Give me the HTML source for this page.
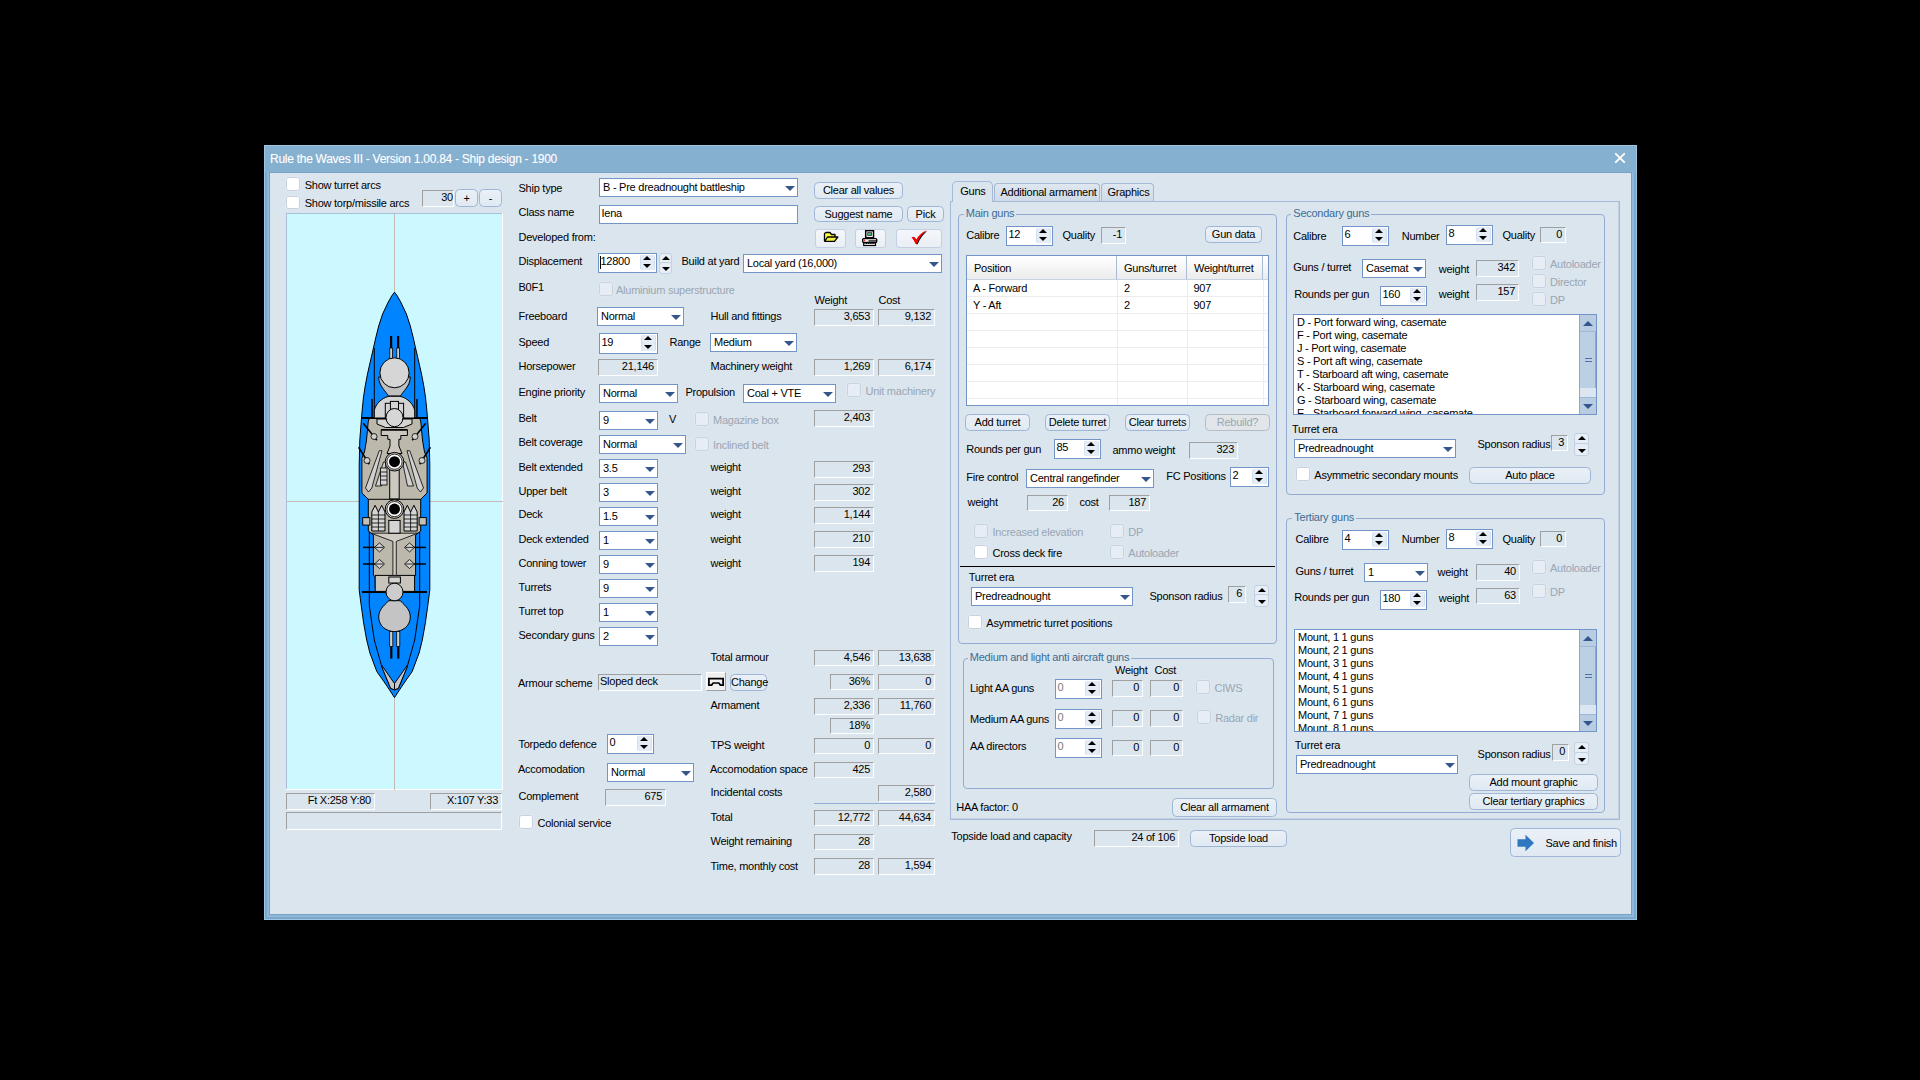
<!DOCTYPE html>
<html><head><meta charset="utf-8"><title>Rule the Waves III - Ship design</title>
<style>
*{box-sizing:border-box;margin:0;padding:0}
html,body{width:1920px;height:1080px;background:#000;overflow:hidden}
body{position:relative;font-family:"Liberation Sans",sans-serif;font-size:11px;letter-spacing:-0.25px;color:#000}
#win{position:absolute;left:264px;top:145px;width:1373px;height:775px;background:linear-gradient(#86b0d0 0,#86b0d0 27px,#7ca8cc 28px);box-shadow:inset 1px 1px 0 #9cc6e6,inset -1px -1px 0 #9cc6e6}
.fr{position:absolute;background:#90b8d8}
#title{position:absolute;left:6px;top:6.800px;font-size:12px;letter-spacing:-0.27px;color:#fff;line-height:15px;white-space:nowrap;text-shadow:0 0 1px rgba(255,255,255,.3)}
#cx{position:absolute;left:1350px;top:7px}
#client{position:absolute;left:5px;top:27px;width:1363px;height:743px;background:#dbe5ee;border:1px solid #76a2c8}
.t{position:absolute;white-space:nowrap;line-height:13px;height:13px}
.t.r{text-align:right}
.t.d,.d{color:#9aa6b2}
.t.gc{color:#3c6c94;background:#dbe5ee;padding:0 2px}
.cb{position:absolute;background:#fff;border:1px solid #7394c6;white-space:nowrap;overflow:hidden}
.cb span{position:absolute;left:3px;top:50%;margin-top:-6.5px;line-height:13px}
.cb i{position:absolute;right:2.500px;top:50%;margin-top:-2px;width:0;height:0;border-left:5px solid transparent;border-right:5px solid transparent;border-top:5px solid #34568c}
.ed{position:absolute;background:#fff;border:1px solid #7394c6}
.ed span{position:absolute;left:1.500px;top:0.500px;line-height:13px}
.sp{position:absolute;background:#fff;border:1px solid #7394c6;white-space:nowrap}
.sp span{position:absolute;left:1.500px;top:50%;margin-top:-8px;line-height:13px}
.sp.g span{color:#7a7a7a}
.sp b{position:absolute;right:1.500px;top:1px;bottom:2px;width:14.500px;background:#d4e0f0;border-radius:2px}
.sp b u,.ud u{position:absolute;left:50%;margin-left:-4px;top:1px;width:0;height:0;border-left:4px solid transparent;border-right:4px solid transparent;border-bottom:4.500px solid #000}
.sp b s,.ud s{position:absolute;left:50%;margin-left:-4px;bottom:2px;width:0;height:0;border-left:4px solid transparent;border-right:4px solid transparent;border-top:4.500px solid #000}
.sp b:before{content:"";position:absolute;left:1px;right:1px;top:0;height:8px;border-radius:2px;background:#e4ecf6}
.sp b:after{content:"";position:absolute;left:1px;right:1px;bottom:0;height:8px;border-radius:2px;background:#e4ecf6}
.sp b u,.sp b s{z-index:2}
.ud{position:absolute}
.ud:before,.ud:after{content:"";position:absolute;left:0;right:0;height:48%;border:1px solid #c2d0e2;border-radius:3px;background:#e8eef6}
.ud:before{top:0}.ud:after{bottom:0}
.ud u{top:3px;z-index:2}.ud s{bottom:3px;z-index:2}
.bx{position:absolute;border:1px solid;border-color:#a0a0a0 #fff #fff #a0a0a0;line-height:13px;padding:0 3px 0 1px;white-space:nowrap;overflow:hidden}
.bx.r{text-align:right}.bx.p0{padding-right:0}.bx.l{text-align:left}
.bt{position:absolute;border:1px solid #a0b6d6;border-radius:4.500px;background:linear-gradient(#eaf0f7,#e0e9f2);text-align:center;white-space:nowrap}
.bt.dis{color:#9aa6b2;border-color:#b4bcc4;background:#e2e6ea}
.cbn{position:absolute;background:#f0f0f0;border:1px solid;border-color:#fff #a0a0a0 #a0a0a0 #fff}
.ib{position:absolute;border:1px solid #c4d0e2;border-radius:3px;background:linear-gradient(#f4f6fa,#eaeff5)}
.ib svg{position:absolute}
.ck{position:absolute;width:13.600px;height:13.700px;margin-top:-0.700px;background:#fff;border:1px solid #c6d1de;border-radius:2.500px;box-shadow:0 0 0 0.500px #e4ebf2}
.ck.dis{background:#e6edf4;border-color:#c8d2dd}
.gb{position:absolute;border:1px solid #93aad2;border-radius:4px}
#page{position:absolute;left:950px;top:201px;width:670px;height:619px;border:1px solid #a6b9d6;box-shadow:inset -1px -1px 0 #c4d2e4}
.tab{position:absolute;border:1px solid #a6b9d6;border-bottom:none;border-radius:4px 4px 0 0;background:linear-gradient(#dfe7f0,#cfdbe8)}
.tab span{position:absolute;top:2px;line-height:13px;white-space:nowrap}
.tab.act{background:#dbe5ee;border-radius:5px 5px 0 0}
.tab.act:after{content:"";position:absolute;left:0;right:0;bottom:0;height:1px;background:#dbe5ee}
#tbl{position:absolute;background:#fff;border:1px solid #7394c6;overflow:hidden}
.th{position:absolute;top:0;height:23.500px;background:linear-gradient(#fff,#ececec);border-right:1px solid #a8bcd8;border-bottom:1px solid #c8d4e4}
.th span{position:absolute;left:7px;top:5.500px;line-height:13px;white-space:nowrap}
.hl{position:absolute;left:0;right:0;height:1px;background:#ececec}
.vl{position:absolute;top:24px;bottom:0;width:1px;background:#ececec}
.td{position:absolute;line-height:13px;white-space:nowrap}
.lb{position:absolute;background:#fff;border:1px solid #7394c6;overflow:hidden}
.li{position:absolute;left:3px;line-height:13px;white-space:nowrap}
.sb{position:absolute;right:0;top:0;bottom:0;width:17px;background:#dce6f2;border-left:1px solid #90a8d0}
.sbu,.sbd{position:absolute;left:0;right:0;height:17px;background:#b8cce2}
.sbu{top:0;border-bottom:1px solid #a0b6d4}.sbd{bottom:0;border-top:1px solid #a0b6d4}
.sbu i{position:absolute;left:3px;top:6px;width:0;height:0;border-left:5px solid transparent;border-right:5px solid transparent;border-bottom:5px solid #34568c}
.sbd i{position:absolute;left:3px;top:6px;width:0;height:0;border-left:5px solid transparent;border-right:5px solid transparent;border-top:5px solid #34568c}
.sbt{position:absolute;left:0;right:0;top:17px;bottom:26px;background:#bcd0e4;border-right:1px solid #90a8d0}
.sbt em{position:absolute;left:4.500px;top:50%;margin-top:-2px;width:7px;height:4px;border-top:1px solid #5070a8;border-bottom:1px solid #5070a8}
</style></head>
<body>
<div id="win"><div id="title">Rule the Waves III - Version 1.00.84 - Ship design - 1900</div><svg id="cx" width="12" height="12" viewBox="0 0 12 12"><path d="M1.8 1.800 L10.2 10.200 M10.2 1.800 L1.8 10.200" stroke="#fff" stroke-width="1.900" stroke-linecap="round"/></svg><div class="fr" style="left:3px;top:27px;width:2px;height:745px"></div><div class="fr" style="left:1368px;top:27px;width:2px;height:745px"></div><div class="fr" style="left:3px;top:770px;width:1367px;height:2px"></div><div id="client"></div></div>
<svg id="ship" width="1920" height="1080" viewBox="0 0 1920 1080" style="position:absolute;left:0;top:0;pointer-events:none"><rect x="286" y="213" width="217" height="577" fill="#ccf8ff"/><rect x="286" y="213" width="1" height="577" fill="#a8c0d8"/><rect x="286" y="213" width="217" height="1" fill="#a8c0d8"/><rect x="502" y="213" width="1" height="577" fill="#fff"/><rect x="286" y="789" width="217" height="1" fill="#fff"/><rect x="394" y="214" width="1" height="576" fill="#c4bcb4"/><rect x="287" y="501" width="216" height="1" fill="#c4bcb4"/><polygon points="394.5,292.2 391.7,296.0 388.3,302.0 382.6,314.0 378.7,326.0 375.7,338.0 373.0,350.0 370.2,362.0 367.5,374.0 365.2,386.0 363.4,398.0 362.2,410.0 361.5,418.0 359.8,440.0 359.2,465.0 359.2,590.0 361.0,604.0 363.6,622.8 366.7,640.0 369.9,653.0 376.8,671.5 386.3,685.0 394.5,697.6 402.7,685.0 412.2,671.5 419.1,653.0 422.3,640.0 425.4,622.8 428.0,604.0 429.8,590.0 429.8,465.0 429.2,440.0 427.5,418.0 426.8,410.0 425.6,398.0 423.8,386.0 421.5,374.0 418.8,362.0 416.0,350.0 413.3,338.0 410.3,326.0 406.4,314.0 400.7,302.0 397.3,296.0 394.5,292.2" fill="#0084ff" stroke="#000" stroke-width="1"/><path d="M374.3 348 V416 M414.7 348 V416" stroke="#000" fill="none"/><polyline points="369.3,530.0 369.3,605.8 374.3,640.0 381.9,667.0 390.7,688.5 394.5,689.7 394.5,689.7 398.3,688.5 407.1,667.0 414.7,640.0 419.7,605.8 419.7,530.0" fill="none" stroke="#000"/><polygon points="381.5,665.0 394.5,683.5 407.5,665.0 407.1,667.0 398.3,688.5 394.5,689.7 390.7,688.5 381.9,667.0" fill="#c8c8c8" stroke="#000"/><path d="M394.5 683.5 V689.7" stroke="#000"/><rect x="361.4" y="417" width="66.400" height="2" fill="#000"/><rect x="362" y="591" width="65" height="2" fill="#000"/><rect x="390" y="336" width="2.200" height="12" fill="#000"/><rect x="389.8" y="348" width="2.800" height="11" fill="#d0d0d0" stroke="#000" stroke-width="0.800"/><rect x="397" y="336" width="2.200" height="12" fill="#000"/><rect x="396.8" y="348" width="2.800" height="11" fill="#d0d0d0" stroke="#000" stroke-width="0.800"/><path d="M378.7 377 C378.7 386 386.5 392 388.5 396 H400.5 C402.5 392 410.3 386 410.3 377 Z" fill="#c0c0c0" stroke="#000"/><ellipse cx="394.5" cy="372.800" rx="14.600" ry="15" fill="#d6d6d6" stroke="#000"/><path d="M374.3 418 V410 C376.5 402 384.5 396.300 390.5 396.300 H398.5 C404.5 396.300 412.5 402 414.7 410 V418 Z" fill="#d4d4d4" stroke="#000"/><rect x="385.3" y="403.300" width="18.300" height="14" fill="#d4d4d4" stroke="#000"/><rect x="390.4" y="401.400" width="8.100" height="8" fill="#d4d4d4" stroke="#000"/><rect x="371.3" y="399" width="1.500" height="19" fill="#000"/><rect x="416.2" y="399" width="1.500" height="19" fill="#000"/><polygon points="369.3,418.5 368.3,421.0 366.5,440.0 364.5,452.0 361.9,458.0 361.9,493.0 368.3,499.3 368.3,531.0 373.4,535.0 373.4,575.4 375.2,577.0 375.2,588.0 378.0,591.5 411.0,591.5 413.8,588.0 413.8,577.0 415.6,575.4 415.6,535.0 420.7,531.0 420.7,499.3 427.1,493.0 427.1,458.0 424.5,452.0 422.5,440.0 420.7,421.0 419.7,418.5" fill="#bcb8ac" stroke="#000"/><rect x="375.2" y="575.400" width="39.400" height="16" fill="#c8c4bc" stroke="#000"/><path d="M377.0 419 V424 L385.5 427.500 H403.5 L412.0 424 V419 Z" fill="#d4d4d4" stroke="#000"/><ellipse cx="394.5" cy="417.600" rx="8.500" ry="9.100" fill="#d6d6d6" stroke="#000"/><path d="M381.2 429.900 H407.400 V435.500 H400.800 V439.300 H398.900 L398.900 446 L402 453.500 H387 L390 446 V439.300 H387.800 V435.500 H381.200 Z" fill="#ccc8c0" stroke="#000"/><rect x="381.2" y="429" width="26.200" height="1.600" fill="#000"/><rect x="389.7" y="466" width="9.500" height="33" fill="#ccc8c0" stroke="#000"/><polygon points="379.3,450.700 382.0,450.700 371.8,488 368.5,492 365.5,488" fill="#d0d0d0" stroke="#000" stroke-width="0.800"/><polygon points="386.5,462 383.5,462 375.5,486 381.5,486" fill="#d0d0d0" stroke="#000" stroke-width="0.800"/><path d="M363.3 423.300 L376.8 440.300 M358.6 447.200 L369.3 464.200" stroke="#000" stroke-width="1.600"/><circle cx="374.0" cy="436.500" r="3" fill="#d0d0d0" stroke="#000" stroke-width="0.800"/><circle cx="367.0" cy="460.500" r="3" fill="#d0d0d0" stroke="#000" stroke-width="0.800"/><rect x="362.7" y="517.600" width="7.200" height="7.500" fill="#c4c0b8" stroke="#000"/><path d="M371.8 531 V512 L375.1 505.300 L378.4 512 L381.7 505.300 L385.0 512 V531 Z" fill="#d4d4d4" stroke="#000"/><path d="M378.4 512 V531 M371.8 515 H385.0 M371.8 519 H385.0 M371.8 523 H385.0 M371.8 527 H385.0" stroke="#000" stroke-width="0.800" fill="none"/><path d="M363.0 547.4 L379.5 547.4" stroke="#000" stroke-width="1.500"/><polygon points="379.5,542.9 374.5,547.4 379.5,551.9 384.5,547.4" fill="#d0d0d0" stroke="#000" stroke-width="0.800"/><path d="M375.5 547.4 H383.5" stroke="#000" stroke-width="0.800"/><path d="M363.0 564 L379.5 564" stroke="#000" stroke-width="1.500"/><polygon points="379.5,559.5 374.5,564 379.5,568.5 384.5,564" fill="#d0d0d0" stroke="#000" stroke-width="0.800"/><path d="M375.5 564 H383.5" stroke="#000" stroke-width="0.800"/><polygon points="409.7,450.700 407.0,450.700 417.2,488 420.5,492 423.5,488" fill="#d0d0d0" stroke="#000" stroke-width="0.800"/><polygon points="402.5,462 405.5,462 413.5,486 407.5,486" fill="#d0d0d0" stroke="#000" stroke-width="0.800"/><path d="M425.7 423.300 L412.2 440.300 M430.4 447.200 L419.7 464.200" stroke="#000" stroke-width="1.600"/><circle cx="415.0" cy="436.500" r="3" fill="#d0d0d0" stroke="#000" stroke-width="0.800"/><circle cx="422.0" cy="460.500" r="3" fill="#d0d0d0" stroke="#000" stroke-width="0.800"/><rect x="419.1" y="517.600" width="7.200" height="7.500" fill="#c4c0b8" stroke="#000"/><path d="M404.0 531 V512 L407.3 505.300 L410.6 512 L413.9 505.300 L417.2 512 V531 Z" fill="#d4d4d4" stroke="#000"/><path d="M410.6 512 V531 M404.0 515 H417.2 M404.0 519 H417.2 M404.0 523 H417.2 M404.0 527 H417.2" stroke="#000" stroke-width="0.800" fill="none"/><path d="M426.0 547.4 L409.5 547.4" stroke="#000" stroke-width="1.500"/><polygon points="409.5,542.9 414.5,547.4 409.5,551.9 404.5,547.4" fill="#d0d0d0" stroke="#000" stroke-width="0.800"/><path d="M413.5 547.4 H405.5" stroke="#000" stroke-width="0.800"/><path d="M426.0 564 L409.5 564" stroke="#000" stroke-width="1.500"/><polygon points="409.5,559.5 414.5,564 409.5,568.5 404.5,564" fill="#d0d0d0" stroke="#000" stroke-width="0.800"/><path d="M413.5 564 H405.5" stroke="#000" stroke-width="0.800"/><rect x="380.5" y="468" width="6.500" height="17" fill="#d4d4d4" stroke="#000" stroke-width="0.800"/><path d="M380.5 472 H387 M380.500 476 H387 M380.500 480 H387" stroke="#000" stroke-width="0.800"/><path d="M368 499.300 H421" stroke="#000"/><path d="M371 533.200 L392.900 541.400 V575.400 H396.300 V541.400 L418 533.200 Z" fill="#d0ccc4" stroke="#000" stroke-width="0.800"/><rect x="388.8" y="520.400" width="11.300" height="12.800" fill="#d4d4d4" stroke="#000"/><circle cx="394.5" cy="461.7" r="9.300" fill="#ccc8c0" stroke="#000"/><circle cx="394.5" cy="461.7" r="7.600" fill="#fff" stroke="#000" stroke-width="0.800"/><circle cx="394.5" cy="461.7" r="5.500" fill="#000"/><circle cx="394.5" cy="509.1" r="9.300" fill="#ccc8c0" stroke="#000"/><circle cx="394.5" cy="509.1" r="7.600" fill="#fff" stroke="#000" stroke-width="0.800"/><circle cx="394.5" cy="509.1" r="5.500" fill="#000"/><rect x="388.8" y="577" width="11.600" height="6" fill="#d4d4d4" stroke="#000"/><path d="M378.7 617 C378.7 608 386.5 604 388.5 600.700 H400.5 C402.5 604 410.3 608 410.3 617 C410.3 626 402.5 631.600 394.5 631.600 C386.5 631.600 378.7 626 378.7 617 Z" fill="#c4c4c4" stroke="#000"/><ellipse cx="394.5" cy="592" rx="8.500" ry="8.800" fill="#cccccc" stroke="#000"/><rect x="389.7" y="631.600" width="3.100" height="15" fill="#d0d0d0" stroke="#000" stroke-width="0.800"/><rect x="390.2" y="646.600" width="2.200" height="12" fill="#000"/><rect x="396.7" y="631.600" width="3.100" height="15" fill="#d0d0d0" stroke="#000" stroke-width="0.800"/><rect x="397.2" y="646.600" width="2.200" height="12" fill="#000"/></svg>
<div class="ck" style="left:286.3px;top:177.9px"></div>
<div class="ck" style="left:286.3px;top:196.2px"></div>
<div class="t " style="left:304.7px;top:178.8px">Show turret arcs</div>
<div class="t " style="left:304.7px;top:197.1px">Show torp/missile arcs</div>
<div class="bx r p0" style="left:422px;top:190px;width:32px;height:17px">30</div>
<div class="bt" style="left:455px;top:189px;width:23px;height:18px;line-height:16px">+</div>
<div class="bt" style="left:479px;top:189px;width:23px;height:18px;line-height:16px">-</div>
<div class="bx r" style="left:286px;top:793px;width:89px;height:17px">Ft X:258 Y:80</div>
<div class="bx r" style="left:430px;top:793px;width:72px;height:17px">X:107 Y:33</div>
<div class="bx r" style="left:286px;top:812px;width:216px;height:18px"></div>
<div class="t " style="left:518.5px;top:181.9px">Ship type</div>
<div class="cb" style="left:599px;top:178px;width:199px;height:19px"><span>B - Pre dreadnought battleship</span><i></i></div>
<div class="bt" style="left:814px;top:182px;width:89px;height:17px;line-height:15px">Clear all values</div>
<div class="t " style="left:518.5px;top:205.9px">Class name</div>
<div class="ed" style="left:599px;top:205px;width:199px;height:19px"><span>Iena</span></div>
<div class="bt" style="left:814px;top:206px;width:89px;height:16px;line-height:14px">Suggest name</div>
<div class="bt" style="left:907px;top:206px;width:37px;height:16px;line-height:14px">Pick</div>
<div class="t " style="left:518.5px;top:230.9px">Developed from:</div>
<div class="ib" style="left:815px;top:229px;width:31px;height:19px"></div>
<div class="ib" style="left:855px;top:229px;width:31px;height:19px"></div>
<div class="ib" style="left:896px;top:229px;width:46px;height:19px"></div>
<svg width="140" height="24" viewBox="810 226 140 24" style="position:absolute;left:810px;top:226px"><path d="M824.5 241 V233.500 L826 232.500 H830 L831.500 234.500 H835 V237" fill="#ffff40" stroke="#000" stroke-width="1.300" stroke-linejoin="round"/><path d="M824.700 241.300 L827.500 237 H837.800 L834.500 241.300 Z" fill="#f4f440" stroke="#000" stroke-width="1.300" stroke-linejoin="round"/><rect x="865.7" y="230.700" width="7.800" height="7" fill="#fff" stroke="#000" stroke-width="1.500"/><rect x="867.3" y="232.200" width="4.600" height="3.600" fill="#222"/><rect x="868" y="232.800" width="3.200" height="2.200" fill="#20d060"/><rect x="868.5" y="232.800" width="2" height="1" fill="#e040e0"/><rect x="862.7" y="238.600" width="14" height="3.800" rx="1" fill="#fff" stroke="#000" stroke-width="1.400"/><rect x="863.7" y="243" width="11.800" height="2.500" fill="#fff" stroke="#000" stroke-width="1.200"/><rect x="868.5" y="240.300" width="8" height="1.200" fill="#000"/><circle cx="864.600" cy="240.300" r="0.800" fill="#f00"/><path d="M866 243.600 h1 m1.200 0 h1 m1.200 0 h1 m1.200 0 h1" stroke="#000" stroke-width="1"/><path d="M912.300 237.800 L914.500 237.200 L916.800 240.300 C919.500 236 922.500 233 927.300 230.800 C923 234.500 920 238.800 917.700 244.200 L916.200 244.200 C915.300 241.800 914 239.600 912.300 237.800 Z" fill="#000"/><path d="M911.500 237.300 L913.700 236.700 L916 239.800 C918.700 235.500 921.700 232.500 926.500 230.300 C922.200 234 919.200 238.300 916.900 243.700 L915.400 243.700 C914.500 241.300 913.200 239.100 911.500 237.300 Z" fill="#ff0000"/></svg>
<div class="t " style="left:518.5px;top:255.2px">Displacement</div>
<div class="sp" style="left:598px;top:253px;width:59px;height:20px"><span>12800</span><b><u></u><s></s></b></div>
<div style="position:absolute;left:600px;top:256px;width:1px;height:13px;background:#000"></div>
<div class="ud" style="left:659px;top:253px;width:13px;height:21px"><u></u><s></s></div>
<div class="t " style="left:681.5px;top:255.4px">Build at yard</div>
<div class="cb" style="left:743px;top:254px;width:199px;height:19px"><span>Local yard (16,000)</span><i></i></div>
<div class="t " style="left:518.5px;top:281.4px">B0F1</div>
<div class="ck dis" style="left:599px;top:283px"></div>
<div class="t d" style="left:616.0px;top:283.9px">Aluminium superstructure</div>
<div class="t " style="left:814.5px;top:293.9px">Weight</div>
<div class="t " style="left:878.5px;top:293.9px">Cost</div>
<div class="t " style="left:518.5px;top:309.7px">Freeboard</div>
<div class="cb" style="left:597px;top:307px;width:87px;height:19px"><span>Normal</span><i></i></div>
<div class="t " style="left:710.5px;top:309.7px">Hull and fittings</div>
<div class="bx r" style="left:814px;top:309px;width:60px;height:17px">3,653</div>
<div class="bx r" style="left:878px;top:309px;width:57px;height:17px">9,132</div>
<div class="t " style="left:518.5px;top:335.9px">Speed</div>
<div class="sp" style="left:599px;top:333px;width:59px;height:21px"><span>19</span><b><u></u><s></s></b></div>
<div class="t " style="left:669.5px;top:336.4px">Range</div>
<div class="cb" style="left:710px;top:333px;width:87px;height:19px"><span>Medium</span><i></i></div>
<div class="t " style="left:518.5px;top:360.2px">Horsepower</div>
<div class="bx r" style="left:598px;top:359px;width:60px;height:17px">21,146</div>
<div class="t " style="left:710.5px;top:360.2px">Machinery weight</div>
<div class="bx r" style="left:814px;top:359px;width:60px;height:17px">1,269</div>
<div class="bx r" style="left:878px;top:359px;width:57px;height:17px">6,174</div>
<div class="t " style="left:518.5px;top:385.9px">Engine priority</div>
<div class="cb" style="left:599px;top:384px;width:79px;height:19px"><span>Normal</span><i></i></div>
<div class="t " style="left:685.5px;top:386.4px">Propulsion</div>
<div class="cb" style="left:743px;top:384px;width:93px;height:19px"><span>Coal + VTE</span><i></i></div>
<div class="ck dis" style="left:847px;top:384px"></div>
<div class="t d" style="left:865.5px;top:384.9px">Unit machinery</div>
<div class="t " style="left:518.5px;top:411.9px">Belt</div>
<div class="cb" style="left:599px;top:411px;width:59px;height:19px"><span>9</span><i></i></div>
<div class="t " style="left:669.0px;top:412.9px">V</div>
<div class="ck dis" style="left:695px;top:413px"></div>
<div class="t d" style="left:713.0px;top:413.9px">Magazine box</div>
<div class="bx r" style="left:814px;top:410px;width:60px;height:17px">2,403</div>
<div class="t " style="left:518.5px;top:435.9px">Belt coverage</div>
<div class="cb" style="left:599px;top:435px;width:87px;height:19px"><span>Normal</span><i></i></div>
<div class="ck dis" style="left:695px;top:438px"></div>
<div class="t d" style="left:713.0px;top:438.9px">Inclined belt</div>
<div class="t " style="left:518.5px;top:460.9px">Belt extended</div>
<div class="cb" style="left:599px;top:459px;width:59px;height:19px"><span>3.5</span><i></i></div>
<div class="t " style="left:710.5px;top:460.9px">weight</div>
<div class="bx r" style="left:814px;top:461px;width:60px;height:17px">293</div>
<div class="t " style="left:518.5px;top:484.7px">Upper belt</div>
<div class="cb" style="left:599px;top:483px;width:59px;height:19px"><span>3</span><i></i></div>
<div class="t " style="left:710.5px;top:484.7px">weight</div>
<div class="bx r" style="left:814px;top:484px;width:60px;height:17px">302</div>
<div class="t " style="left:518.5px;top:507.7px">Deck</div>
<div class="cb" style="left:599px;top:507px;width:59px;height:19px"><span>1.5</span><i></i></div>
<div class="t " style="left:710.5px;top:507.7px">weight</div>
<div class="bx r" style="left:814px;top:507px;width:60px;height:17px">1,144</div>
<div class="t " style="left:518.5px;top:532.7px">Deck extended</div>
<div class="cb" style="left:599px;top:531px;width:59px;height:19px"><span>1</span><i></i></div>
<div class="t " style="left:710.5px;top:532.7px">weight</div>
<div class="bx r" style="left:814px;top:531px;width:60px;height:17px">210</div>
<div class="t " style="left:518.5px;top:556.9px">Conning tower</div>
<div class="cb" style="left:599px;top:555px;width:59px;height:19px"><span>9</span><i></i></div>
<div class="t " style="left:710.5px;top:556.9px">weight</div>
<div class="bx r" style="left:814px;top:555px;width:60px;height:17px">194</div>
<div class="t " style="left:518.5px;top:580.9px">Turrets</div>
<div class="cb" style="left:599px;top:579px;width:59px;height:19px"><span>9</span><i></i></div>
<div class="t " style="left:518.5px;top:605.1px">Turret top</div>
<div class="cb" style="left:599px;top:603px;width:59px;height:19px"><span>1</span><i></i></div>
<div class="t " style="left:518.5px;top:628.9px">Secondary guns</div>
<div class="cb" style="left:599px;top:627px;width:59px;height:19px"><span>2</span><i></i></div>
<div class="t " style="left:710.5px;top:650.9px">Total armour</div>
<div class="bx r" style="left:814px;top:650px;width:60px;height:16px">4,546</div>
<div class="bx r" style="left:878px;top:650px;width:57px;height:16px">13,638</div>
<div class="t " style="left:518.0px;top:676.9px">Armour scheme</div>
<div class="bx l" style="left:598px;top:674px;width:104px;height:17px">Sloped deck</div>
<div class="cbn" style="left:706px;top:672px;width:20px;height:19px"><svg width="18" height="10" viewBox="706 676 18 10" style="position:absolute;left:0;top:4px"><path d="M707 676.800 H723 V685 H719 L717.300 682.800 H712.700 L711 685 H707 Z M708.800 678.500 V683.300 H710 L711.800 681.200 H718.200 L720 683.300 H721.200 V678.500 Z" fill="#000" fill-rule="evenodd"/></svg></div>
<div class="bt" style="left:730px;top:674px;width:37px;height:17px;line-height:15px">Change</div>
<div class="bx r" style="left:830px;top:674px;width:44px;height:16px">36%</div>
<div class="bx r" style="left:878px;top:674px;width:57px;height:16px">0</div>
<div class="t " style="left:710.5px;top:699.4px">Armament</div>
<div class="bx r" style="left:814px;top:698px;width:60px;height:17px">2,336</div>
<div class="bx r" style="left:878px;top:698px;width:57px;height:17px">11,760</div>
<div class="bx r" style="left:830px;top:718px;width:44px;height:16px">18%</div>
<div class="t " style="left:518.5px;top:737.7px">Torpedo defence</div>
<div class="sp" style="left:607px;top:734px;width:47px;height:20px"><span>0</span><b><u></u><s></s></b></div>
<div class="t " style="left:710.5px;top:738.9px">TPS weight</div>
<div class="bx r" style="left:814px;top:738px;width:60px;height:16px">0</div>
<div class="bx r" style="left:878px;top:738px;width:57px;height:16px">0</div>
<div class="t " style="left:518.0px;top:763.1px">Accomodation</div>
<div class="cb" style="left:607px;top:763px;width:87px;height:19px"><span>Normal</span><i></i></div>
<div class="t " style="left:710.0px;top:762.9px">Accomodation space</div>
<div class="bx r" style="left:814px;top:762px;width:60px;height:16px">425</div>
<div class="t " style="left:518.5px;top:789.7px">Complement</div>
<div class="bx r" style="left:605px;top:789px;width:61px;height:17px">675</div>
<div class="t " style="left:710.5px;top:786.4px">Incidental costs</div>
<div class="bx r" style="left:878px;top:785px;width:57px;height:17px">2,580</div>
<div style="position:absolute;left:814px;top:803px;width:121px;height:1px;background:#8fb0d4"></div>
<div class="ck" style="left:519px;top:816px"></div>
<div class="t " style="left:537.5px;top:816.9px">Colonial service</div>
<div class="t " style="left:710.5px;top:810.7px">Total</div>
<div class="bx r" style="left:814px;top:810px;width:60px;height:16px">12,772</div>
<div class="bx r" style="left:878px;top:810px;width:57px;height:16px">44,634</div>
<div class="t " style="left:710.5px;top:834.7px">Weight remaining</div>
<div class="bx r" style="left:814px;top:834px;width:60px;height:16px">28</div>
<div class="t " style="left:710.5px;top:859.7px">Time, monthly cost</div>
<div class="bx r" style="left:814px;top:858px;width:60px;height:17px">28</div>
<div class="bx r" style="left:878px;top:858px;width:57px;height:17px">1,594</div>
<div id="page"></div>
<div class="tab" style="left:994px;top:183px;width:106px;height:18px"><span style="left:5.5px">Additional armament</span></div>
<div class="tab" style="left:1101px;top:183px;width:53px;height:18px"><span style="left:5.5px">Graphics</span></div>
<div class="tab act" style="left:952px;top:181px;width:41px;height:21px"><span style="left:7.300px;top:2.800px">Guns</span></div>
<div class="gb" style="left:958px;top:214px;width:319px;height:430px"></div>
<div class="t gc" style="left:963.8px;top:207.4px">Main guns</div>
<div class="t " style="left:966.3px;top:228.9px">Calibre</div>
<div class="sp" style="left:1006px;top:226px;width:47px;height:20px"><span>12</span><b><u></u><s></s></b></div>
<div class="t " style="left:1062.5px;top:228.9px">Quality</div>
<div class="bx r" style="left:1101px;top:227px;width:25px;height:17px">-1</div>
<div class="bt" style="left:1205px;top:226px;width:57px;height:17px;line-height:15px">Gun data</div>
<div id="tbl" style="left:966px;top:255px;width:303px;height:151px"><div class="th" style="left:0;width:150px"><span>Position</span></div><div class="th" style="left:150px;width:70px"><span>Guns/turret</span></div><div class="th" style="left:220px;width:75.500px"><span>Weight/turret</span></div><div class="th" style="left:295.5px;width:6px"></div><div class="hl" style="top:40.0px"></div><div class="hl" style="top:57.0px"></div><div class="hl" style="top:74.0px"></div><div class="hl" style="top:91.0px"></div><div class="hl" style="top:108.0px"></div><div class="hl" style="top:125.0px"></div><div class="hl" style="top:142.0px"></div><div class="vl" style="left:149.5px"></div><div class="vl" style="left:219.5px"></div><div class="vl" style="left:295.5px"></div><div class="td" style="left:6px;top:26px">A - Forward</div><div class="td" style="left:157px;top:26px">2</div><div class="td" style="left:226.500px;top:26px">907</div><div class="td" style="left:6px;top:43px">Y - Aft</div><div class="td" style="left:157px;top:43px">2</div><div class="td" style="left:226.500px;top:43px">907</div></div>
<div class="bt" style="left:965px;top:414px;width:65px;height:17px;line-height:15px">Add turret</div>
<div class="bt" style="left:1045px;top:414px;width:65px;height:17px;line-height:15px">Delete turret</div>
<div class="bt" style="left:1125px;top:414px;width:65px;height:17px;line-height:15px">Clear turrets</div>
<div class="bt dis" style="left:1205px;top:414px;width:65px;height:17px;line-height:15px">Rebuild?</div>
<div class="t " style="left:966.3px;top:442.7px">Rounds per gun</div>
<div class="sp" style="left:1054px;top:439px;width:47px;height:20px"><span>85</span><b><u></u><s></s></b></div>
<div class="t " style="left:1112.5px;top:443.9px">ammo weight</div>
<div class="bx r" style="left:1189px;top:442px;width:49px;height:17px">323</div>
<div class="t " style="left:966.3px;top:471.4px">Fire control</div>
<div class="cb" style="left:1026px;top:469px;width:128px;height:19px"><span>Central rangefinder</span><i></i></div>
<div class="t " style="left:1166.3px;top:469.7px">FC Positions</div>
<div class="sp" style="left:1230px;top:467px;width:39px;height:20px"><span>2</span><b><u></u><s></s></b></div>
<div class="t " style="left:967.5px;top:495.9px">weight</div>
<div class="bx r" style="left:1027px;top:495px;width:41px;height:16px">26</div>
<div class="t " style="left:1079.5px;top:495.9px">cost</div>
<div class="bx r" style="left:1109px;top:495px;width:41px;height:16px">187</div>
<div class="ck dis" style="left:974px;top:525px"></div>
<div class="t d" style="left:992.5px;top:525.9px">Increased elevation</div>
<div class="ck dis" style="left:1110px;top:525px"></div>
<div class="t d" style="left:1128.3px;top:525.9px">DP</div>
<div class="ck" style="left:974px;top:546px"></div>
<div class="t " style="left:992.5px;top:546.9px">Cross deck fire</div>
<div class="ck dis" style="left:1110px;top:546px"></div>
<div class="t d" style="left:1128.3px;top:546.9px">Autoloader</div>
<div style="position:absolute;left:960px;top:566px;width:315px;height:1px;background:#000"></div>
<div class="t " style="left:968.8px;top:570.9px">Turret era</div>
<div class="cb" style="left:971px;top:587px;width:162px;height:19px"><span>Predreadnought</span><i></i></div>
<div class="t " style="left:1149.5px;top:589.7px">Sponson radius</div>
<div class="bx r" style="left:1228px;top:586px;width:18px;height:17px">6</div>
<div class="ud" style="left:1254px;top:585px;width:15px;height:22px"><u></u><s></s></div>
<div class="ck" style="left:968px;top:616px"></div>
<div class="t " style="left:986.3px;top:616.9px">Asymmetric turret positions</div>
<div class="gb" style="left:963px;top:658px;width:311px;height:131px"></div>
<div class="t gc" style="left:967.8px;top:651.4px">Medium and light anti aircraft guns</div>
<div class="t " style="left:1115.0px;top:663.9px">Weight</div>
<div class="t " style="left:1154.5px;top:663.9px">Cost</div>
<div class="t " style="left:970.0px;top:681.9px">Light AA guns</div>
<div class="sp g" style="left:1055px;top:679px;width:47px;height:20px"><span>0</span><b><u></u><s></s></b></div>
<div class="bx r" style="left:1112px;top:680px;width:31px;height:17px">0</div>
<div class="bx r" style="left:1150px;top:680px;width:33px;height:17px">0</div>
<div class="ck dis" style="left:1196px;top:681px"></div>
<div class="t d" style="left:1214.6px;top:681.9px">CIWS</div>
<div class="t " style="left:970.0px;top:712.7px">Medium AA guns</div>
<div class="sp g" style="left:1055px;top:709px;width:47px;height:20px"><span>0</span><b><u></u><s></s></b></div>
<div class="bx r" style="left:1112px;top:710px;width:31px;height:17px">0</div>
<div class="bx r" style="left:1150px;top:710px;width:33px;height:17px">0</div>
<div class="ck dis" style="left:1197px;top:711px"></div>
<div class="t d" style="left:1215.3px;top:711.9px">Radar dir</div>
<div class="t " style="left:970.0px;top:740.2px">AA directors</div>
<div class="sp g" style="left:1055px;top:738px;width:47px;height:20px"><span>0</span><b><u></u><s></s></b></div>
<div class="bx r" style="left:1112px;top:740px;width:31px;height:16px">0</div>
<div class="bx r" style="left:1150px;top:740px;width:33px;height:16px">0</div>
<div class="t " style="left:956.3px;top:801.4px">HAA factor: 0</div>
<div class="bt" style="left:1172px;top:798px;width:105px;height:19px;line-height:17px">Clear all armament</div>
<div class="t " style="left:951.3px;top:830.2px">Topside load and capacity</div>
<div class="bx r" style="left:1094px;top:830px;width:85px;height:17px">24 of 106</div>
<div class="bt" style="left:1190px;top:830px;width:97px;height:17px;line-height:15px">Topside load</div>
<div class="gb" style="left:1286px;top:214px;width:319px;height:281px"></div>
<div class="t gc" style="left:1291.3px;top:207.4px">Secondary guns</div>
<div class="t " style="left:1293.3px;top:229.7px">Calibre</div>
<div class="sp" style="left:1342px;top:226px;width:47px;height:20px"><span>6</span><b><u></u><s></s></b></div>
<div class="t " style="left:1401.8px;top:229.7px">Number</div>
<div class="sp" style="left:1446px;top:225px;width:47px;height:20px"><span>8</span><b><u></u><s></s></b></div>
<div class="t " style="left:1502.5px;top:228.9px">Quality</div>
<div class="bx r" style="left:1540px;top:227px;width:26px;height:16px">0</div>
<div class="t " style="left:1293.3px;top:260.9px">Guns / turret</div>
<div class="cb" style="left:1362px;top:259px;width:64px;height:19px"><span>Casemat</span><i></i></div>
<div class="t " style="left:1438.8px;top:262.7px">weight</div>
<div class="bx r" style="left:1476px;top:260px;width:43px;height:17px">342</div>
<div class="ck dis" style="left:1532px;top:257px"></div>
<div class="t d" style="left:1550.0px;top:257.9px">Autoloader</div>
<div class="ck dis" style="left:1532px;top:275px"></div>
<div class="t d" style="left:1550.0px;top:275.9px">Director</div>
<div class="ck dis" style="left:1532px;top:293px"></div>
<div class="t d" style="left:1550.0px;top:293.9px">DP</div>
<div class="t " style="left:1294.3px;top:287.7px">Rounds per gun</div>
<div class="sp" style="left:1380px;top:286px;width:47px;height:20px"><span>160</span><b><u></u><s></s></b></div>
<div class="t " style="left:1438.8px;top:287.7px">weight</div>
<div class="bx r" style="left:1476px;top:284px;width:43px;height:17px">157</div>
<div class="lb" style="left:1293px;top:314px;width:304px;height:101px"><div class="li" style="top:0.9px">D - Port forward wing, casemate</div><div class="li" style="top:13.9px">F - Port wing, casemate</div><div class="li" style="top:26.9px">J - Port wing, casemate</div><div class="li" style="top:39.9px">S - Port aft wing, casemate</div><div class="li" style="top:52.9px">T - Starboard aft wing, casemate</div><div class="li" style="top:65.9px">K - Starboard wing, casemate</div><div class="li" style="top:78.9px">G - Starboard wing, casemate</div><div class="li" style="top:91.9px">E - Starboard forward wing, casemate</div><div class="sb"><div class="sbu"><i></i></div><div class="sbt"><em></em></div><div class="sbd"><i></i></div></div></div>
<div class="t " style="left:1292.0px;top:422.7px">Turret era</div>
<div class="cb" style="left:1294px;top:439px;width:162px;height:19px"><span>Predreadnought</span><i></i></div>
<div class="t " style="left:1477.5px;top:438.4px">Sponson radius</div>
<div class="bx r" style="left:1551px;top:435px;width:17px;height:16px">3</div>
<div class="ud" style="left:1574px;top:433px;width:15px;height:23px"><u></u><s></s></div>
<div class="ck" style="left:1296px;top:468px"></div>
<div class="t " style="left:1314.3px;top:468.9px">Asymmetric secondary mounts</div>
<div class="bt" style="left:1469px;top:467px;width:122px;height:17px;line-height:15px">Auto place</div>
<div class="gb" style="left:1286px;top:518px;width:319px;height:295px"></div>
<div class="t gc" style="left:1292.3px;top:511.4px">Tertiary guns</div>
<div class="t " style="left:1295.5px;top:533.4px">Calibre</div>
<div class="sp" style="left:1342px;top:530px;width:47px;height:20px"><span>4</span><b><u></u><s></s></b></div>
<div class="t " style="left:1401.8px;top:533.4px">Number</div>
<div class="sp" style="left:1446px;top:529px;width:47px;height:20px"><span>8</span><b><u></u><s></s></b></div>
<div class="t " style="left:1502.5px;top:532.9px">Quality</div>
<div class="bx r" style="left:1540px;top:531px;width:26px;height:16px">0</div>
<div class="t " style="left:1295.5px;top:564.7px">Guns / turret</div>
<div class="cb" style="left:1364px;top:563px;width:64px;height:19px"><span>1</span><i></i></div>
<div class="t " style="left:1437.5px;top:565.9px">weight</div>
<div class="bx r" style="left:1476px;top:564px;width:44px;height:17px">40</div>
<div class="ck dis" style="left:1532px;top:561px"></div>
<div class="t d" style="left:1550.0px;top:561.9px">Autoloader</div>
<div class="ck dis" style="left:1532px;top:585px"></div>
<div class="t d" style="left:1550.0px;top:585.9px">DP</div>
<div class="t " style="left:1294.3px;top:591.4px">Rounds per gun</div>
<div class="sp" style="left:1380px;top:590px;width:47px;height:20px"><span>180</span><b><u></u><s></s></b></div>
<div class="t " style="left:1438.8px;top:591.9px">weight</div>
<div class="bx r" style="left:1476px;top:588px;width:44px;height:16px">63</div>
<div class="lb" style="left:1294px;top:629px;width:303px;height:103px"><div class="li" style="top:1.2px">Mount, 1 1 guns</div><div class="li" style="top:14.2px">Mount, 2 1 guns</div><div class="li" style="top:27.2px">Mount, 3 1 guns</div><div class="li" style="top:40.2px">Mount, 4 1 guns</div><div class="li" style="top:53.2px">Mount, 5 1 guns</div><div class="li" style="top:66.2px">Mount, 6 1 guns</div><div class="li" style="top:79.2px">Mount, 7 1 guns</div><div class="li" style="top:92.2px">Mount, 8 1 guns</div><div class="sb"><div class="sbu"><i></i></div><div class="sbt"><em></em></div><div class="sbd"><i></i></div></div></div>
<div class="t " style="left:1294.8px;top:738.7px">Turret era</div>
<div class="cb" style="left:1296px;top:755px;width:162px;height:19px"><span>Predreadnought</span><i></i></div>
<div class="t " style="left:1477.6px;top:748.2px">Sponson radius</div>
<div class="bx r" style="left:1552px;top:744px;width:17px;height:17px">0</div>
<div class="ud" style="left:1574px;top:742px;width:15px;height:23px"><u></u><s></s></div>
<div class="bt" style="left:1469px;top:774px;width:129px;height:17px;line-height:15px">Add mount graphic</div>
<div class="bt" style="left:1469px;top:793px;width:129px;height:17px;line-height:15px">Clear tertiary graphics</div>
<div class="bt" style="left:1510px;top:828px;width:111px;height:29px;line-height:28px;text-align:left"><svg width="18" height="18" viewBox="0 0 18 18" style="position:absolute;left:6px;top:5px"><path d="M0.500 5.200 H8.500 V0.800 L17 9 L8.500 17.200 V12.800 H0.500 Z" fill="#2f78c0"/></svg><span style="position:absolute;left:34.500px;top:0">Save and finish</span></div>
</body></html>
